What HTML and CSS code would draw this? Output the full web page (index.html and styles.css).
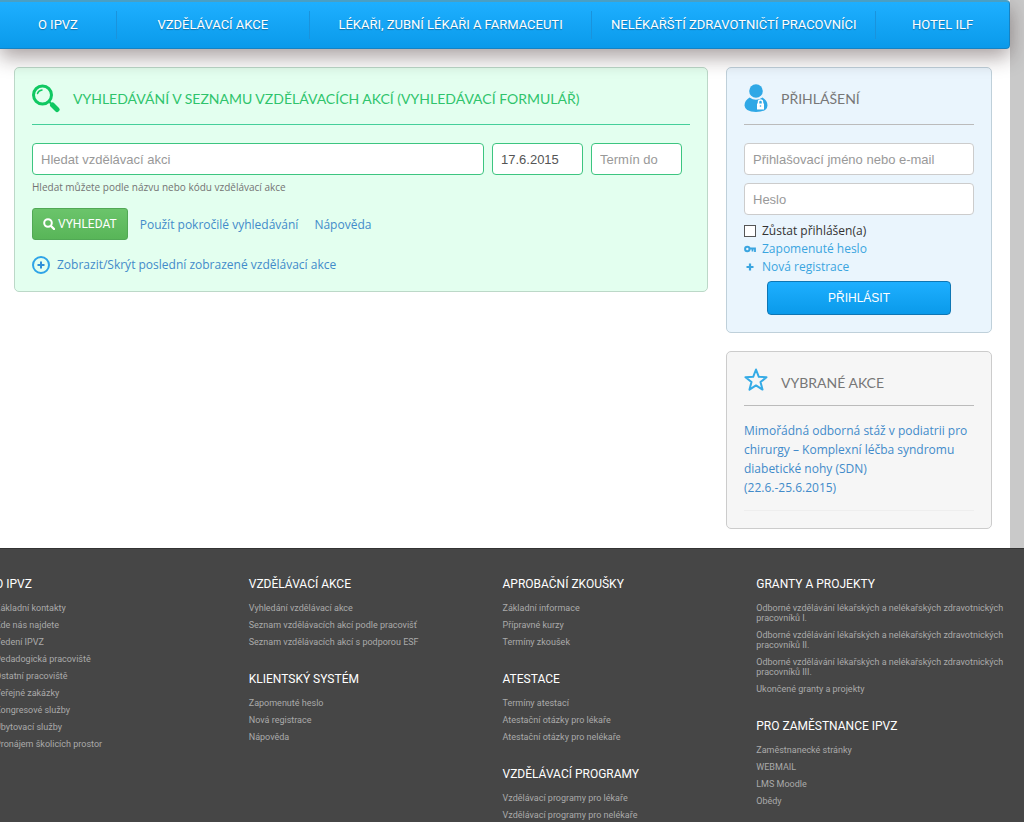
FILE: index.html
```html
<!DOCTYPE html>
<html lang="cs">
<head>
<meta charset="utf-8">
<title>IPVZ – Vzdělávací akce</title>
<link rel="stylesheet" href="styles.css">
</head>
<body>
<div class="backdrop">
  <div class="page">
    <nav class="nav">
      <a href="#">O IPVZ</a>
      <a href="#">VZDĚLÁVACÍ AKCE</a>
      <a href="#">LÉKAŘI, ZUBNÍ LÉKAŘI A FARMACEUTI</a>
      <a href="#">NELÉKAŘŠTÍ ZDRAVOTNIČTÍ PRACOVNÍCI</a>
      <a href="#">HOTEL ILF</a>
    </nav>
    <div class="content">
      <main class="panel panel-search">
        <h1 class="panel-title">
          <svg class="title-icon" viewBox="0 0 28 30" aria-hidden="true">
            <circle cx="10.500" cy="12" r="9" fill="none" stroke="#10c862" stroke-width="3"/>
            <path d="M5.500 10.500Q6.500 7.500 10 7" fill="none" stroke="#10c862" stroke-width="1.500" stroke-linecap="round"/>
            <path d="M17 18.500l2 2" stroke="#10c862" stroke-width="2"/>
            <path d="M20.500 22l4.500 4.500" stroke="#10c862" stroke-width="5" stroke-linecap="round"/>
          </svg>
          VYHLEDÁVÁNÍ V SEZNAMU VZDĚLÁVACÍCH AKCÍ (VYHLEDÁVACÍ FORMULÁŘ)
        </h1>
        <form class="search-form">
          <div class="fields">
            <input class="input" type="text" placeholder="Hledat vzdělávací akci" aria-label="Hledat vzdělávací akci">
            <input class="input input-date" type="text" value="17.6.2015" aria-label="Termín od">
            <input class="input input-date" type="text" placeholder="Termín do" aria-label="Termín do">
          </div>
          <p class="help">Hledat můžete podle názvu nebo kódu vzdělávací akce</p>
          <div class="actions">
            <button class="btn-search" type="button">
              <svg viewBox="0 0 12 12" width="12" height="12" aria-hidden="true"><circle cx="5" cy="5" r="3.800" fill="none" stroke="#fff" stroke-width="2"/><path d="M8 8l3 3" stroke="#fff" stroke-width="2.400" stroke-linecap="round"/></svg>
              VYHLEDAT
            </button>
            <a href="#">Použít pokročilé vyhledávání</a>
            <a href="#">Nápověda</a>
          </div>
        </form>
        <a class="toggle" href="#">
          <svg viewBox="0 0 18 18" width="18" height="18" aria-hidden="true"><circle cx="9" cy="9" r="8" fill="none" stroke="#2fa4e7" stroke-width="2"/><path d="M9 5.500v7M5.500 9h7" stroke="#2f8fd8" stroke-width="2"/></svg>
          Zobrazit/Skrýt poslední zobrazené vzdělávací akce
        </a>
      </main>
      <aside class="side">
        <section class="panel panel-login">
          <h2 class="panel-title">
            <svg class="title-icon side-icon" viewBox="0 0 24 30" aria-hidden="true">
              <circle cx="12" cy="8" r="6.800" fill="#2fa8e6"/>
              <path d="M5.500 14.500Q12 19 18.500 14.500Q23.500 17.500 23.500 22.500Q23 29 12 29Q1 29 .5 22.500Q.5 17.500 5.500 14.500z" fill="#2fa8e6"/>
              <path d="M13 20.500h7v6h-7z" fill="#fff"/><path d="M14.500 21v-2a2 2 0 0 1 4 0v2" fill="none" stroke="#fff" stroke-width="1.500"/><circle cx="16.500" cy="23" r=".8" fill="#2fa8e6"/>
            </svg>
            PŘIHLÁŠENÍ
          </h2>
          <form class="login-form">
            <input class="input" type="text" placeholder="Přihlašovací jméno nebo e-mail" aria-label="Přihlašovací jméno nebo e-mail">
            <input class="input" type="password" placeholder="Heslo" aria-label="Heslo">
            <div class="options">
              <label class="option"><input class="check" type="checkbox">Zůstat přihlášen(a)</label>
              <a class="option" href="#"><svg viewBox="0 0 12 12" width="12" height="12" aria-hidden="true"><circle cx="3.300" cy="6" r="2.200" fill="none" stroke="#3aa5e0" stroke-width="2"/><path d="M5.500 5.500H11V9M8.500 5.500v3" fill="none" stroke="#3aa5e0" stroke-width="1.800"/></svg>Zapomenuté heslo</a>
              <a class="option" href="#"><svg viewBox="0 0 12 12" width="12" height="12" aria-hidden="true"><path d="M6 2.500v7M2.500 6h7" stroke="#3aa5e0" stroke-width="2.200"/></svg>Nová registrace</a>
            </div>
            <button class="btn-login" type="button">PŘIHLÁSIT</button>
          </form>
        </section>
        <section class="panel panel-picks">
          <h2 class="panel-title">
            <svg class="title-icon side-icon" viewBox="0 0 24 30" aria-hidden="true"><path d="M12 3.500l2.800 7.300 7.700.4-6 4.900 2 7.500-6.500-4.200-6.500 4.200 2-7.500-6-4.900 7.700-.4z" fill="none" stroke="#35abe6" stroke-width="2" stroke-linejoin="round"/></svg>
            VYBRANÉ AKCE
          </h2>
          <p class="pick"><a href="#">Mimořádná odborná stáž v podiatrii pro chirurgy – Komplexní léčba syndromu diabetické nohy (SDN)<br>(22.6.-25.6.2015)</a></p>
        </section>
      </aside>
    </div>
  </div>
</div>
<footer class="footer">
  <div class="footer-grid">
    <div class="col">
      <section><h3>O IPVZ</h3>
        <ul><li><a href="#">Základní kontakty</a></li><li><a href="#">Kde nás najdete</a></li><li><a href="#">Vedení IPVZ</a></li><li><a href="#">Pedadogická pracoviště</a></li><li><a href="#">Ostatní pracoviště</a></li><li><a href="#">Veřejné zakázky</a></li><li><a href="#">Kongresové služby</a></li><li><a href="#">Ubytovací služby</a></li><li><a href="#">Pronájem školicích prostor</a></li></ul></section>
    </div>
    <div class="col">
      <section><h3>VZDĚLÁVACÍ AKCE</h3>
        <ul><li><a href="#">Vyhledání vzdělávací akce</a></li><li><a href="#">Seznam vzdělávacích akcí podle pracovišť</a></li><li><a href="#">Seznam vzdělávacích akcí s podporou ESF</a></li></ul></section>
      <section><h3>KLIENTSKÝ SYSTÉM</h3>
        <ul><li><a href="#">Zapomenuté heslo</a></li><li><a href="#">Nová registrace</a></li><li><a href="#">Nápověda</a></li></ul></section>
    </div>
    <div class="col">
      <section><h3>APROBAČNÍ ZKOUŠKY</h3>
        <ul><li><a href="#">Základní informace</a></li><li><a href="#">Přípravné kurzy</a></li><li><a href="#">Termíny zkoušek</a></li></ul></section>
      <section><h3>ATESTACE</h3>
        <ul><li><a href="#">Termíny atestací</a></li><li><a href="#">Atestační otázky pro lékaře</a></li><li><a href="#">Atestační otázky pro nelékaře</a></li></ul></section>
      <section><h3>VZDĚLÁVACÍ PROGRAMY</h3>
        <ul><li><a href="#">Vzdělávací programy pro lékaře</a></li><li><a href="#">Vzdělávací programy pro nelékaře</a></li></ul></section>
    </div>
    <div class="col">
      <section><h3>GRANTY A PROJEKTY</h3>
        <ul><li><a href="#">Odborné vzdělávání lékařských a nelékařských zdravotnických pracovníků I.</a></li><li><a href="#">Odborné vzdělávání lékařských a nelékařských zdravotnických pracovníků II.</a></li><li><a href="#">Odborné vzdělávání lékařských a nelékařských zdravotnických pracovníků III.</a></li><li><a href="#">Ukončené granty a projekty</a></li></ul></section>
      <section><h3>PRO ZAMĚSTNANCE IPVZ</h3>
        <ul><li><a href="#">Zaměstnanecké stránky</a></li><li><a href="#">WEBMAIL</a></li><li><a href="#">LMS Moodle</a></li><li><a href="#">Obědy</a></li></ul></section>
    </div>
  </div>
</footer>
</body>
</html>
```
FILE: styles.css
```css
* { box-sizing: border-box; }
body {
  margin: 0;
  min-height: 100vh;
  display: flex;
  flex-direction: column;
  overflow-x: hidden;
  font: 12px/19px "Open Sans", "Noto Sans", sans-serif;
  color: #333;
  background: #464646;
}
a { color: #428bca; text-decoration: none; }
h1, h2, h3, p, ul { margin: 0; padding: 0; font-weight: 400; }
ul { list-style: none; }

.backdrop { background: #c9c9c9; padding-right: 14px; }
.page { background: #fff; }

.nav {
  display: grid;
  grid-template-columns: 116fr 193fr 283fr 284fr 134fr;
  align-items: center;
  height: 49px;
  border: solid #1583c4;
  border-width: 2px 1px 1px 0;
  border-top-color: #4a9fc4;
  border-radius: 0 4px 4px 0;
  background: linear-gradient(#1eafff, #0a9aea);
  box-shadow: 0 8px 20px rgba(40, 20, 20, .4);
  position: relative;
}
.nav a {
  color: #fff;
  font: 13px/28px Roboto, sans-serif;
  text-align: center;
  white-space: nowrap;
  text-shadow: 0 1px 1px rgba(0, 0, 0, .3);
  border-left: 1px solid #1a93dc;
}
.nav a:first-child { border-left: 0; }

.content {
  display: flex;
  align-items: flex-start;
  gap: 18px;
  padding: 18px 18px 19px 14px;
}
.panel { border: 1px solid #ccc; border-radius: 5px; padding: 0 17px; }
.panel-search {
  flex: 1;
  border-color: #bcd8c8;
  background: #e3ffef;
  padding-bottom: 17px;
}
.side { width: 266px; display: flex; flex-direction: column; gap: 18px; }
.panel-login { background: #eaf5fd; border-color: #bfd0da; padding-bottom: 17px; }
.panel-picks { background: #f6f6f6; padding-bottom: 17px; }

.panel-title {
  display: flex;
  align-items: center;
  gap: 13px;
  height: 57px;
  padding-top: 4px;
  margin-bottom: 18px;
  border-bottom: 1px solid #bbb;
  color: #777;
  font: 14px Lato, sans-serif;
  white-space: nowrap;
}
.panel-search .panel-title { color: #2fc46c; border-bottom-color: #45cf9a; }
.panel-picks .panel-title { height: 54px; margin-bottom: 15px; padding-top: 8px; }
.title-icon { width: 28px; height: 30px; flex: none; }
.side-icon { width: 24px; }
.panel-picks .side-icon { margin-bottom: 4px; }

.input {
  width: 100%;
  height: 32px;
  padding: 0 8px;
  border: 1px solid #ccc;
  border-radius: 4px;
  background: #fff;
  color: #555;
  font: 13px "Liberation Sans", Arial, sans-serif;
}
.input::placeholder { color: #999; opacity: 1; }
.fields { display: flex; gap: 8px; padding-right: 8px; }
.fields .input { border-color: #3cc580; flex: 1; min-width: 0; }
.fields .input-date { flex: none; width: 91px; }
.help { margin-top: 5px; font-size: 10px; line-height: 14px; color: #737373; }
.actions { display: flex; align-items: center; gap: 16px; margin-top: 14px; }
.btn-search {
  display: flex;
  align-items: center;
  gap: 3px;
  height: 32px;
  padding: 0 10px;
  margin-right: -4px;
  border: 1px solid #51a855;
  border-radius: 3px;
  background: linear-gradient(#6bc46b, #58b558);
  color: #fff;
  font: 12px Roboto, sans-serif;
}
.toggle { display: flex; align-items: center; gap: 7px; margin-top: 15px; }

.login-form { display: flex; flex-direction: column; gap: 8px; }
.options { display: grid; margin-top: -1px; }
.option { display: flex; align-items: center; gap: 6px; line-height: 18px; }
.options a { color: #3aa5e0; }
.check {
  appearance: none;
  width: 12px;
  height: 12px;
  margin: 0;
  border: 1px solid #555;
  background: #fff;
}
.btn-login {
  align-self: center;
  width: 80%;
  height: 34px;
  margin-top: -3px;
  border: 1px solid #0e76b4;
  border-radius: 4px;
  background: linear-gradient(#1eafff, #0a9aea);
  color: #fff;
  font: 12px "Liberation Sans", Arial, sans-serif;
}
.pick { padding-bottom: 13px; border-bottom: 1px solid #eee; }

.footer { flex: 1; background: #464646; border-top: 1px solid #333; }
.footer-grid {
  display: grid;
  grid-template-columns: repeat(4, 1fr);
  margin: 0 14px 0 -5px;
  padding-top: 26px;
}
.footer h3 { color: #fff; font: 12px/19px Roboto, sans-serif; margin-bottom: 9px; }
.footer section + section { margin-top: 16px; }
.footer li { font: 9px/10px Roboto, sans-serif; padding-bottom: 7px; }
.footer a { color: #aaa; }
```
